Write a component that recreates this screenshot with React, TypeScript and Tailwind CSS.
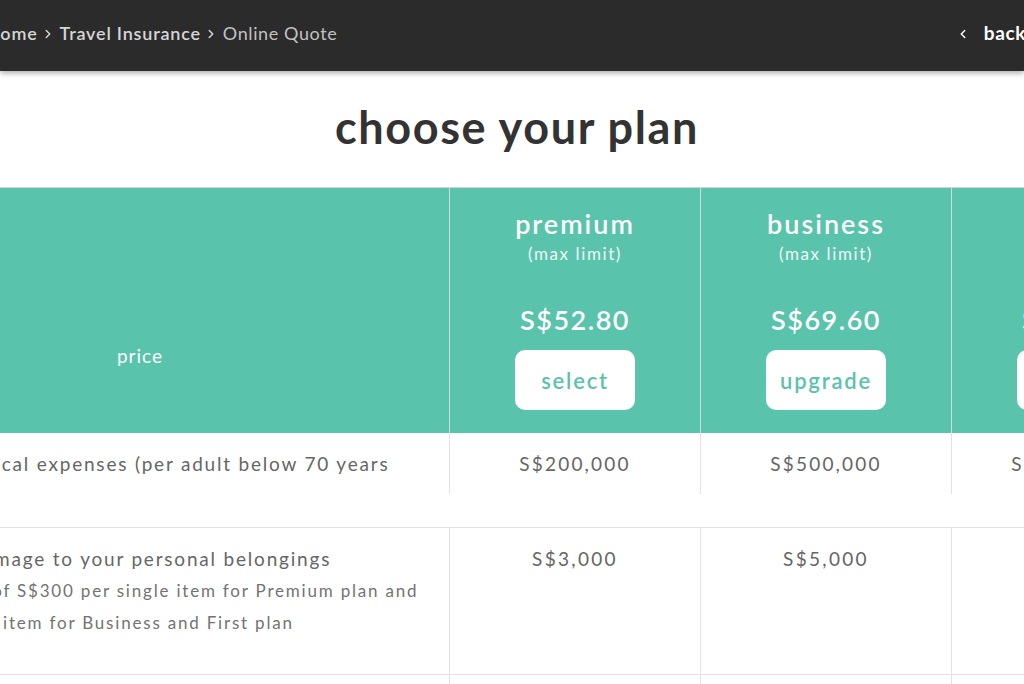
import React from 'react';
import { ChevronRight, ChevronLeft } from 'lucide-react';

interface Plan {
  name: string;
  price: string;
  action: string;
  medical: string;
  belongings: string;
}

const plans: Plan[] = [
  { name: 'premium', price: 'S$52.80', action: 'select', medical: 'S$200,000', belongings: 'S$3,000' },
  { name: 'business', price: 'S$69.60', action: 'upgrade', medical: 'S$500,000', belongings: 'S$5,000' },
  { name: 'first', price: 'S$81.10', action: 'upgrade', medical: 'S$1,000,000', belongings: 'S$8,000' },
];

const gridCols = 'grid grid-cols-[618px_251px_251px_251px]';

const App: React.FC = () => {
  return (
    <div className="w-[1024px] h-[684px] overflow-hidden bg-white font-['Lato','Open_Sans',sans-serif]">
      {/* Top bar */}
      <header className="relative z-10 h-[71px] bg-[#2b2b2b] shadow-[0_2px_6px_rgba(0,0,0,0.35)] flex items-center pb-[4px]">
        <nav className="ml-[-14px] flex items-center text-[18px] text-[#d6d6d6] font-semibold tracking-[0.8px]">
          <span>Home</span>
          <ChevronRight size={14} strokeWidth={2.5} className="ml-[3px] mr-[5px]" />
          <span>Travel Insurance</span>
          <ChevronRight size={14} strokeWidth={2.5} className="ml-[3px] mr-[5px]" />
          <span className="text-[#c2c2c2] font-normal tracking-[0.6px]">Online Quote</span>
        </nav>
        <div className="flex-1" />
        <div className="mr-[-2px] flex items-center text-white">
          <ChevronLeft size={14} strokeWidth={2.5} />
          <span className="ml-[14px] text-[19px] font-bold tracking-[0.6px]">back</span>
        </div>
      </header>

      {/* Title */}
      <h1 className="mt-[30px] text-center text-[45px] leading-[53px] font-bold text-[#333333] tracking-[1.6px] pl-[10px]">
        choose your plan
      </h1>

      {/* Table */}
      <div className="mt-[33px] ml-[-169px] w-[1371px] border-t border-[#d4d4d4]">
        {/* Header */}
        <div className={`${gridCols} bg-[#5ac3ab] text-white`}>
          <div className="h-[91px]" />
          {plans.map((p) => (
            <div key={p.name} className="h-[91px] border-l border-[#cfdcd8] flex flex-col items-center pt-[19px]">
              <div className="text-[27px] leading-[33px] font-semibold tracking-[2px]">{p.name}</div>
              <div className="mt-[3px] text-[17px] leading-[22px] text-white/90 tracking-[1.6px]">(max limit)</div>
            </div>
          ))}
          <div className="h-[154px] flex items-center justify-center text-[19px] tracking-[1px]">price</div>
          {plans.map((p) => (
            <div key={p.name} className="h-[154px] border-l border-[#cfdcd8] flex flex-col items-center pt-[24px]">
              <div className="text-[27px] leading-[33px] font-semibold tracking-[1.5px]">{p.price}</div>
              <button className="mt-[14px] w-[120px] h-[60px] rounded-[10px] bg-white text-[#5ac3ab] text-[22px] font-semibold tracking-[1.8px]">
                {p.action}
              </button>
            </div>
          ))}
        </div>

        {/* Row: medical */}
        <div className={`${gridCols} text-[19px] leading-[28px] text-[#666666]`}>
          <div className="h-[61px] pt-[17px] pl-[24px] whitespace-nowrap tracking-[1.8px]">
            Overseas medical expenses (per adult below 70 years
          </div>
          {plans.map((p) => (
            <div key={p.name} className="h-[61px] pt-[17px] border-l border-[#e2e2e2] text-center tracking-[2.2px]">
              {p.medical}
            </div>
          ))}
        </div>
        <div className="h-[33px]" />

        {/* Row: belongings */}
        <div className={`${gridCols} border-t border-[#e2e2e2] text-[#666666]`}>
          <div className="h-[146px] pt-[15px] pl-[24px] whitespace-nowrap">
            <div className="text-[19px] leading-[32px] tracking-[1.8px]">Theft of or damage to your personal belongings</div>
            <div className="text-[17px] leading-[32px] text-[#737373] tracking-[1.8px]">Subject to cap of S$300 per single item for Premium plan and</div>
            <div className="text-[17px] leading-[32px] text-[#737373] tracking-[1.8px]">S$500 per each item for Business and First plan</div>
          </div>
          {plans.map((p) => (
            <div key={p.name} className="h-[146px] pt-[15px] border-l border-[#e2e2e2] text-center text-[19px] leading-[32px] tracking-[2.3px]">
              {p.belongings}
            </div>
          ))}
        </div>

        {/* Next row */}
        <div className={`${gridCols} border-t border-[#e2e2e2]`}>
          <div className="h-[60px]" />
          {plans.map((p) => (
            <div key={p.name} className="h-[60px] border-l border-[#e2e2e2]" />
          ))}
        </div>
      </div>
    </div>
  );
};

export default App;
